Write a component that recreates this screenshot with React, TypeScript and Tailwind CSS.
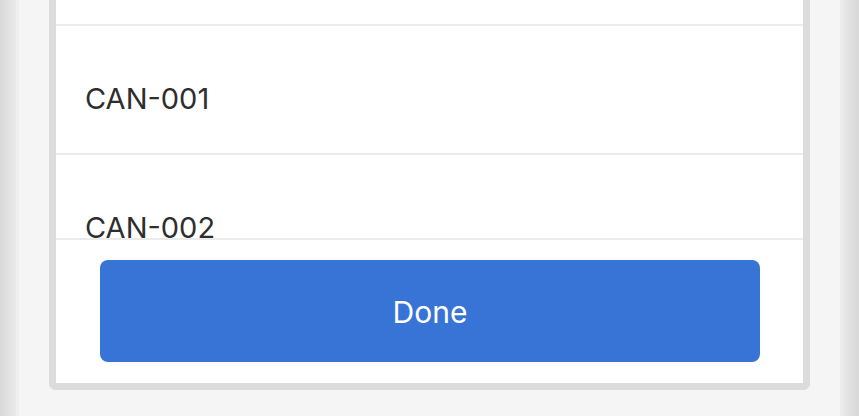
export default function App() {
  return (
    <main className="flex h-[416px] w-[859px] overflow-hidden bg-[#f5f5f5] font-['Inter','Noto_Sans',sans-serif]">
      {/* left edge */}
      <div className="w-[16px] bg-gradient-to-r from-[#d9d9d9] to-[#e9e9e9]" />
      <div className="w-[3px] bg-[#efefef]" />

      <div className="flex flex-1 px-[30px] pb-[26px]">
        {/* sheet */}
        <section className="flex flex-1 flex-col rounded-b-[7px] border-[7px] border-t-0 border-[#dcdcdc] bg-white">
          <div className="flex h-[238px] flex-col overflow-hidden">
            <div className="h-[26px] shrink-0 border-b-2 border-[#ebebeb]" />
            <div className="flex h-[129px] shrink-0 items-center border-b-2 border-[#ebebeb] pl-[29px] pt-[18px]">
              <span className="text-[29px] leading-none text-[#2e2e2e]">CAN-001</span>
            </div>
            <div className="flex h-[129px] shrink-0 items-center border-b-2 border-[#ebebeb] pl-[29px] pt-[18px]">
              <span className="text-[29px] leading-none text-[#2e2e2e]">CAN-002</span>
            </div>
          </div>

          <div className="border-t-2 border-[#ebebeb] px-[44px] pb-[21px] pt-[20px] pr-[43px]">
            <button className="flex h-[102px] w-full items-center justify-center rounded-[8px] bg-[#3874d5] pt-[3px] text-[30px] text-white">
              Done
            </button>
          </div>
        </section>
      </div>

      {/* right edge */}
      <div className="w-[3px] bg-[#ececec]" />
      <div className="w-[16px] bg-gradient-to-r from-[#e9e9e9] to-[#d7d7d7]" />
    </main>
  );
}
